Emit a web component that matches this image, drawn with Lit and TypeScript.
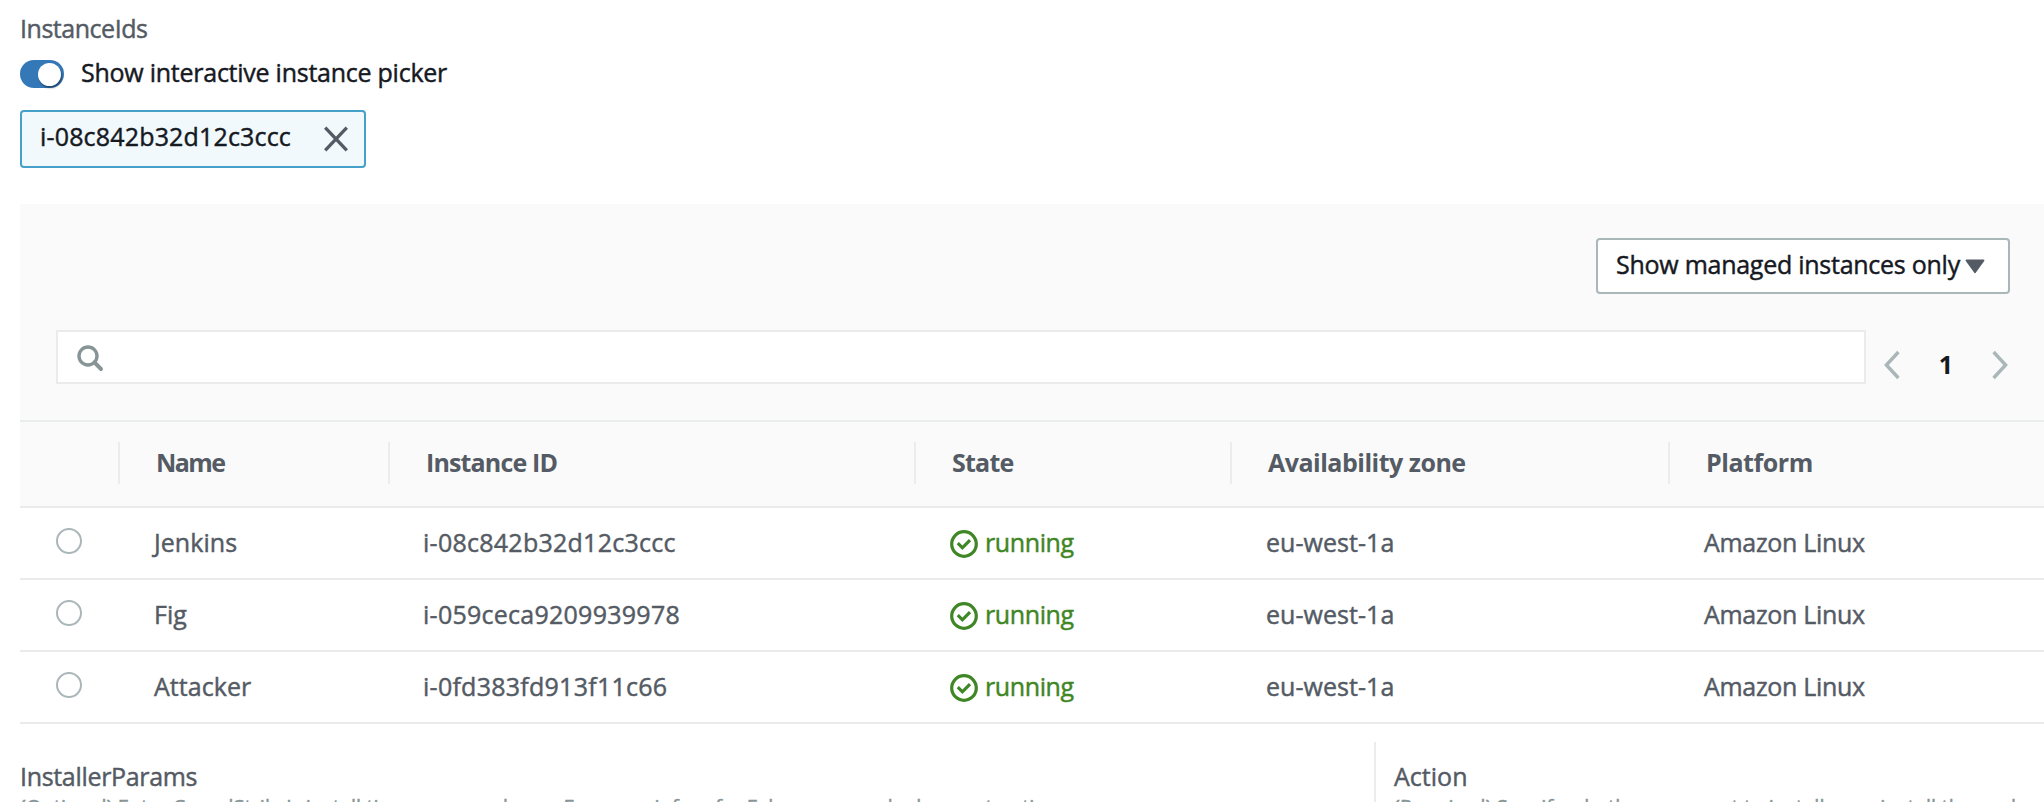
import { LitElement, html, css } from "lit";
import { customElement, property, state } from "lit/decorators.js";

interface Instance {
  name: string;
  id: string;
  state: string;
  zone: string;
  platform: string;
}

const INSTANCES: Instance[] = [
  { name: "Jenkins", id: "i-08c842b32d12c3ccc", state: "running", zone: "eu-west-1a", platform: "Amazon Linux" },
  { name: "Fig", id: "i-059ceca9209939978", state: "running", zone: "eu-west-1a", platform: "Amazon Linux" },
  { name: "Attacker", id: "i-0fd383fd913f11c66", state: "running", zone: "eu-west-1a", platform: "Amazon Linux" },
];

@customElement("instance-table")
class InstanceTable extends LitElement {
  @property({ attribute: false }) rows: Instance[] = [];

  static styles = css`
    :host { display: block; }
    .grid {
      display: grid;
      grid-template-columns: 98px 270px 526px 316px 438px 1fr;
      align-items: center;
    }
    .head {
      height: 82px;
      padding-bottom: 2px;
      background: #fafafa;
      border-top: 2px solid #eaeded;
      border-bottom: 2px solid #ebebeb;
      font-weight: 700;
      -webkit-text-stroke: 0;
    }
    .th {
      height: 42px;
      line-height: 41px;
      border-left: 2px solid #eaeded;
      padding-left: 36px;
    }
    .th.name { letter-spacing: -1.6px; }
    .th.id { letter-spacing: -0.85px; }
    .th.state { letter-spacing: -0.75px; }
    .th.zone { letter-spacing: -0.5px; }
    .th.platform { letter-spacing: -0.45px; }
    .row { height: 70px; border-bottom: 2px solid #ebebeb; background: #fff; }
    .td { padding: 0 0 2px 36px; line-height: 40px; }
    .td.name { letter-spacing: 0.05px; }
    .td.id { letter-spacing: 0.26px; padding-left: 35px; }
    .td.zone { letter-spacing: 0.05px; }
    .td.platform { letter-spacing: -0.32px; }
    .radio {
      box-sizing: border-box;
      width: 26px;
      height: 26px;
      margin: 0 0 4px 36px;
      border: 2px solid #aab7b8;
      border-radius: 50%;
      background: #fff;
    }
    .status {
      display: flex;
      align-items: center;
      gap: 7px;
      color: #3f8624;
      letter-spacing: -0.38px;
    }
    .status svg { display: block; margin-top: 4px; }
  `;

  render() {
    return html`
      <div class="grid head">
        <span></span>
        <div class="th name">Name</div>
        <div class="th id">Instance ID</div>
        <div class="th state">State</div>
        <div class="th zone">Availability zone</div>
        <div class="th platform">Platform</div>
      </div>
      ${this.rows.map(
        (r) => html`
          <div class="grid row">
            <div class="radio" role="radio" aria-checked="false"></div>
            <div class="td name">${r.name}</div>
            <div class="td id">${r.id}</div>
            <div class="td status">
              <svg width="28" height="28" viewBox="0 0 28 28" fill="none" stroke="currentColor" stroke-width="3.2">
                <circle cx="14" cy="14" r="12.3" />
                <path d="M7.8 13.2 L12.4 17.8 L20 10.2" />
              </svg>
              <span>${r.state}</span>
            </div>
            <div class="td zone">${r.zone}</div>
            <div class="td platform">${r.platform}</div>
          </div>
        `
      )}
    `;
  }
}

@customElement("app-root")
class AppRoot extends LitElement {
  @state() private selected = "i-08c842b32d12c3ccc";

  static styles = css`
    :host {
      display: block;
      height: 802px;
      overflow: hidden;
      background: #fff;
      color: #545b64;
      font-family: "Open Sans", "Noto Sans", sans-serif;
      font-size: 25px;
      line-height: 40px;
      white-space: nowrap;
      font-variant-ligatures: none;
      -webkit-text-stroke: 0.45px currentColor;
    }
    .page { padding: 8px 0 0 20px; }
    .label { letter-spacing: -0.46px; }
    .toggle-row {
      display: flex;
      align-items: center;
      gap: 17px;
      height: 46px;
      color: #16191f;
      letter-spacing: -0.25px;
    }
    .toggle-row span { padding-top: 2px; }
    .toggle {
      box-sizing: border-box;
      display: flex;
      justify-content: flex-end;
      align-items: center;
      width: 44px;
      height: 28px;
      margin-top: 6px;
      padding: 0 3px;
      border-radius: 14px;
      background: #3578b8;
    }
    .knob {
      width: 23px;
      height: 23px;
      border-radius: 50%;
      background: #fff;
      box-shadow: 1px 2px 2px rgba(0, 0, 0, 0.4);
    }
    .chip {
      box-sizing: border-box;
      display: flex;
      align-items: center;
      justify-content: space-between;
      width: 346px;
      height: 58px;
      margin-top: 16px;
      padding: 0 16px 6px 18px;
      border: 2px solid #45a1c9;
      border-radius: 4px;
      background: #f1f9fd;
      color: #16191f;
      letter-spacing: 0.17px;
    }
    .chip svg { display: block; margin-top: 6px; }
    .panel { margin-top: 36px; background: #fafafa; padding: 34px 34px 36px 36px; }
    .actions { display: flex; justify-content: flex-end; }
    .filter {
      box-sizing: border-box;
      display: flex;
      align-items: center;
      justify-content: space-between;
      width: 414px;
      height: 56px;
      padding: 0 23px 4px 18px;
      border: 2px solid #aab7b8;
      border-radius: 4px;
      background: #fff;
      color: #16191f;
      letter-spacing: -0.26px;
    }
    .filter svg { display: block; margin-top: 4px; }
    .tools { display: flex; margin-top: 36px; height: 54px; }
    .search {
      box-sizing: border-box;
      display: flex;
      align-items: center;
      width: 1810px;
      height: 54px;
      padding: 2px 0 0 19px;
      border: 2px solid #ebebeb;
      background: #fff;
    }
    .pager {
      display: flex;
      flex: 1;
      align-items: center;
      justify-content: space-between;
      height: 54px;
      padding: 8px 1px 0 17px;
    }
    .pager svg { display: block; }
    .current { color: #16191f; font-weight: 700; padding-bottom: 2px; -webkit-text-stroke: 0; }
    .params {
      display: grid;
      grid-template-columns: 1354px 1fr;
      height: 60px;
      padding-top: 18px;
    }
    .param { padding-top: 14px; }
    .param + .param { border-left: 2px solid #eaeded; padding-left: 18px; }
    .name { letter-spacing: -0.32px; }
    .action { letter-spacing: 0.02px; }
    .hint { font-size: 20px; line-height: 22px; color: #879596; letter-spacing: 0.02px; }
    .action + .hint { letter-spacing: 0.1px; }
  `;

  render() {
    return html`
      <div class="page">
        <div class="label">InstanceIds</div>
        <div class="toggle-row">
          <div class="toggle" role="switch" aria-checked="true"><div class="knob"></div></div>
          <span>Show interactive instance picker</span>
        </div>
        <div class="chip">
          <span>${this.selected}</span>
          <svg width="24" height="26" viewBox="0 0 24 26" fill="none" stroke="#545b64" stroke-width="3.4">
            <path d="M1.2 1.6 L22.8 24.4 M22.8 1.6 L1.2 24.4" />
          </svg>
        </div>

        <div class="panel">
          <div class="actions">
            <div class="filter" role="button">
              <span>Show managed instances only</span>
              <svg width="20" height="15" viewBox="0 0 20 15">
                <path d="M1.5 1.5 H18.5 L10 13.3 Z" fill="#545b64" stroke="#545b64" stroke-width="1.8" stroke-linejoin="round" />
              </svg>
            </div>
          </div>
          <div class="tools">
            <div class="search" role="searchbox">
              <svg width="27" height="27" viewBox="0 0 27 27" fill="none" stroke="#879596">
                <circle cx="11" cy="11" r="9" stroke-width="3.4" />
                <path d="M17.4 17.4 L24 24" stroke-width="4" stroke-linecap="round" />
              </svg>
            </div>
            <div class="pager">
              <svg width="17" height="30" viewBox="0 0 17 30" fill="none" stroke="#aab7b8" stroke-width="3.4">
                <path d="M15.4 2 L3.4 15 L15.4 28" />
              </svg>
              <span class="current">1</span>
              <svg width="17" height="30" viewBox="0 0 17 30" fill="none" stroke="#aab7b8" stroke-width="3.4">
                <path d="M1.6 2 L13.6 15 L1.6 28" />
              </svg>
            </div>
          </div>
        </div>

        <instance-table .rows=${INSTANCES}></instance-table>

        <div class="params">
          <div class="param">
            <div class="name">InstallerParams</div>
            <div class="hint">(Optional) Enter CrowdStrike's install time command args. For more info refer Falcon sensor deployment options</div>
          </div>
          <div class="param">
            <div class="name action">Action</div>
            <div class="hint">(Required) Specify whether you want to install or uninstall the package</div>
          </div>
        </div>
      </div>
    `;
  }
}
